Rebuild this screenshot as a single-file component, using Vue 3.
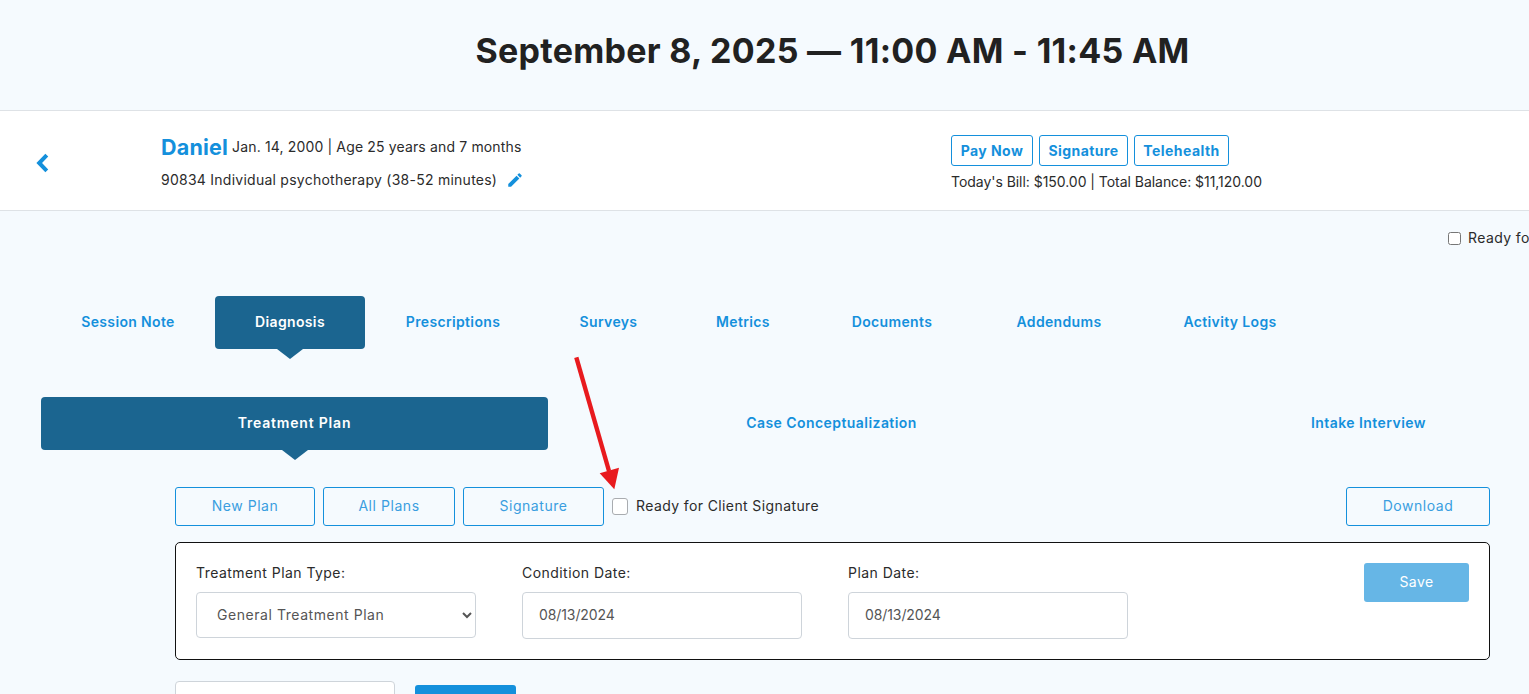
<script setup>
const tabs = [
  { label: 'Session Note', width: 174 },
  { label: 'Diagnosis', width: 150, active: true },
  { label: 'Prescriptions', width: 176 },
  { label: 'Surveys', width: 135 },
  { label: 'Metrics', width: 134 },
  { label: 'Documents', width: 164 },
  { label: 'Addendums', width: 170 },
  { label: 'Activity Logs', width: 172 }
]
const subTabs = [
  { label: 'Treatment Plan', active: true },
  { label: 'Case Conceptualization' },
  { label: 'Intake Interview' }
]
const fields = [
  { label: 'Condition Date:', value: '08/13/2024' },
  { label: 'Plan Date:', value: '08/13/2024' }
]
</script>

<template>
  <div class="page">
    <header class="title-bar">
      <h1>September 8, 2025 — 11:00 AM - 11:45 AM</h1>
    </header>

    <section class="patient-bar">
      <a class="back" href="#" aria-label="Back">
        <svg width="14" height="20" viewBox="0 0 14 20" fill="none">
          <path d="M10.8 2.2 3.2 10l7.6 7.8" stroke="#1490dc" stroke-width="4" />
        </svg>
      </a>
      <div class="patient-info">
        <div class="patient-line">
          <span class="patient-name">Daniel</span>
          <span>Jan. 14, 2000 | Age 25 years and 7 months</span>
        </div>
        <div class="patient-line code-line">
          <span>90834 Individual psychotherapy (38-52 minutes)</span>
          <svg class="pencil" width="18" height="18" viewBox="0 0 24 24" fill="#1490dc">
            <path d="M3 17.25V21h3.75L17.81 9.94l-3.75-3.75L3 17.25zM20.71 7.04a1 1 0 0 0 0-1.41l-2.34-2.34a1 1 0 0 0-1.41 0l-1.83 1.83 3.75 3.75 1.83-1.83z" />
          </svg>
        </div>
      </div>
      <div class="billing">
        <div class="bill-actions">
          <button class="bill-btn pay">Pay Now</button>
          <button class="bill-btn sig">Signature</button>
          <button class="bill-btn tele">Telehealth</button>
        </div>
        <div class="bill-text">Today's Bill: $150.00 | Total Balance: $11,120.00</div>
      </div>
    </section>

    <main class="content">
      <label class="top-check">
        <input type="checkbox" class="small-check" />
        <span>Ready for Client Signature</span>
      </label>

      <nav class="tabs">
        <a
          v-for="tab in tabs"
          :key="tab.label"
          class="tab"
          :class="{ active: tab.active }"
          :style="{ width: tab.width + 'px' }"
        >{{ tab.label }}</a>
      </nav>

      <nav class="sub-tabs">
        <a
          v-for="tab in subTabs"
          :key="tab.label"
          class="sub-tab"
          :class="{ active: tab.active }"
        >{{ tab.label }}</a>
      </nav>

      <div class="actions">
        <button class="outline new-plan">New Plan</button>
        <button class="outline all-plans">All Plans</button>
        <button class="outline signature">Signature</button>
        <label class="client-check">
          <span class="box"></span>
          <span>Ready for Client Signature</span>
        </label>
        <button class="outline download">Download</button>
      </div>

      <section class="card">
        <div class="field type-field">
          <label>Treatment Plan Type:</label>
          <select class="control select">
            <option>General Treatment Plan</option>
          </select>
        </div>
        <div v-for="field in fields" :key="field.label" class="field date-field">
          <label>{{ field.label }}</label>
          <input class="control date" :value="field.value" />
        </div>
        <button class="save">Save</button>
      </section>

      <div class="bottom-row">
        <input class="bottom-input" />
        <button class="bottom-btn"></button>
      </div>

      <svg class="annotation" width="60" height="150" viewBox="0 0 60 150">
        <path d="M5.3 -1.7 38 112" stroke="#e81a1e" stroke-width="4.4" fill="none" />
        <path d="M28.7 114.3 48 108.7 43.3 130.3z" fill="#e81a1e" />
      </svg>
    </main>
  </div>
</template>

<style>
html, body { margin: 0; background: #f5fafe; overflow: hidden; }
</style>

<style scoped>
.page {
  width: 1529px;
  height: 694px;
  overflow: hidden;
  background: #f5fafe;
  color: #2b2b2b;
  font-family: Inter, "Open Sans", sans-serif;
  font-size: 14px;
}
.title-bar {
  height: 100px;
  padding: 0 0 10px 136px;
  border-bottom: 1px solid #dee2e6;
  display: flex;
  justify-content: center;
  align-items: center;
}
h1 {
  margin: 0;
  font-size: 34px;
  font-weight: 700;
  letter-spacing: 0.3px;
  color: #212121;
  white-space: nowrap;
}
.patient-bar {
  height: 99px;
  background: #fff;
  border-bottom: 1px solid #dee2e6;
  display: flex;
  align-items: center;
  padding-left: 36px;
}
.back {
  width: 125px;
  display: flex;
  align-items: center;
  padding-top: 4px;
}
.patient-info { width: 790px; padding-top: 1px; }
.patient-line {
  display: flex;
  align-items: center;
  gap: 4px;
  white-space: nowrap;
  letter-spacing: 0.15px;
}
.patient-name {
  font-size: 21.5px;
  line-height: 26px;
  font-weight: 700;
  color: #1490dc;
  letter-spacing: 0.2px;
}
.code-line {
  margin-top: 11px;
  gap: 9px;
  letter-spacing: 0.25px;
}
.billing { width: 340px; padding-top: 4px; }
.bill-actions { display: flex; gap: 6px; }
.bill-btn {
  height: 31px;
  padding: 0 0 1px;
  border: 1px solid #1490dc;
  border-radius: 3px;
  background: #fff;
  color: #1490dc;
  font: 700 14px Inter, sans-serif;
  letter-spacing: 0.45px;
}
.pay { width: 82px; }
.sig { width: 89px; }
.tele { width: 95px; }
.bill-text { margin-top: 7px; white-space: nowrap; letter-spacing: -0.04px; }
.content { position: relative; }
.top-check {
  height: 65px;
  padding: 20px 0 0 1448px;
  display: flex;
  align-items: flex-start;
  gap: 7px;
  white-space: nowrap;
  line-height: 14px;
  letter-spacing: 0.39px;
}
.small-check { width: 13px; height: 13px; margin: 1px 0 0; }
.tabs { display: flex; height: 53px; padding-left: 41px; }
.tab {
  position: relative;
  box-sizing: border-box;
  padding-bottom: 2px;
  display: flex;
  align-items: center;
  justify-content: center;
  flex: none;
  color: #1490dc;
  font-weight: 600;
  letter-spacing: 0.35px;
  border-radius: 4px;
}
.tab.active, .sub-tab.active { background: #1b6590; color: #fff; }
.tab.active::after, .sub-tab.active::after {
  content: "";
  position: absolute;
  top: 100%;
  left: 50%;
  margin-left: -13px;
  border-style: solid;
  border-width: 10px 13px 0;
  border-color: #1b6590 transparent transparent;
}
.sub-tabs {
  display: flex;
  gap: 30px;
  margin-top: 48px;
  padding-left: 41px;
  height: 53px;
}
.sub-tab {
  position: relative;
  flex: 0 0 507px;
  box-sizing: border-box;
  padding-bottom: 2px;
  display: flex;
  align-items: center;
  justify-content: center;
  color: #1490dc;
  font-weight: 600;
  letter-spacing: 0.44px;
  border-radius: 4px;
}
.sub-tab.active { letter-spacing: 0.8px; }
.actions {
  display: flex;
  align-items: center;
  gap: 8px;
  margin: 37px 0 0 175px;
  width: 1315px;
  height: 39px;
}
.outline {
  height: 39px;
  padding: 0 0 2px;
  background: transparent;
  border: 1px solid #1490dc;
  border-radius: 3px;
  color: #3a9ee0;
  font: 400 14px Inter, sans-serif;
  letter-spacing: 0.55px;
}
.new-plan { width: 140px; }
.all-plans { width: 132px; }
.signature { width: 141px; }
.download { width: 144px; margin-left: auto; }
.client-check {
  display: flex;
  align-items: center;
  gap: 8px;
  white-space: nowrap;
  letter-spacing: 0.39px;
  padding-bottom: 2px;
}
.box {
  width: 14px;
  height: 15px;
  margin-top: 2px;
  background: #fff;
  border: 1px solid #a9acb0;
  border-radius: 3px;
}
.card {
  display: flex;
  align-items: flex-start;
  box-sizing: border-box;
  width: 1315px;
  height: 118px;
  margin: 16px 0 0 175px;
  padding: 20px 20px 0;
  background: #fff;
  border: 1px solid #111;
  border-radius: 5px;
}
.field label {
  display: block;
  line-height: 20px;
  white-space: nowrap;
  margin-bottom: 9px;
  letter-spacing: 0.45px;
}
.field { width: 280px; margin-right: 46px; }
.control {
  display: block;
  box-sizing: border-box;
  width: 280px;
  background: #fff;
  border: 1px solid #ced4da;
  border-radius: 4px;
  color: #555;
  font: 400 14px Inter, sans-serif;
}
.select { height: 46px; padding: 0 0 2px 16px; letter-spacing: 0.55px; }
.date { height: 47px; padding: 0 16px 2px; letter-spacing: -0.1px; }
.save {
  width: 105px;
  height: 39px;
  padding: 0 0 2px;
  margin-left: auto;
  border: 0;
  border-radius: 3px;
  background: #66b6e6;
  color: #fff;
  font: 400 14px Inter, sans-serif;
  letter-spacing: 0.45px;
}
.bottom-row { display: flex; align-items: flex-start; margin: 21px 0 0 175px; gap: 20px; }
.bottom-input {
  box-sizing: border-box;
  width: 220px;
  height: 46px;
  background: #fff;
  border: 1px solid #ced4da;
  border-radius: 4px;
}
.bottom-btn {
  width: 101px;
  height: 40px;
  margin-top: 4px;
  border: 0;
  border-radius: 3px;
  background: #1490dc;
}
.annotation {
  position: absolute;
  left: 571px;
  top: 148px;
  overflow: visible;
}
</style>
